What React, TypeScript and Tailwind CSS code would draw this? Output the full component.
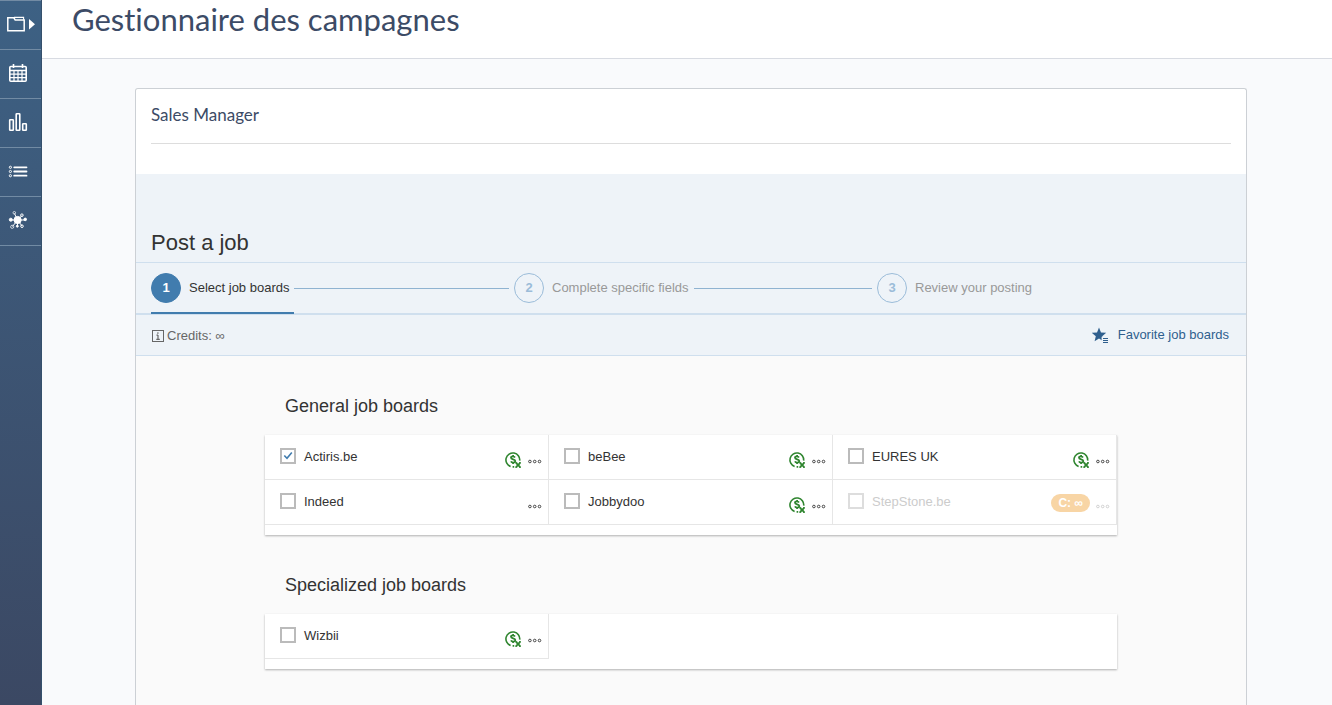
import { useState } from "react";

type Board = {
  name: string;
  free?: boolean;
  credits?: string;
  disabled?: boolean;
};

const generalBoards: Board[] = [
  { name: "Actiris.be", free: true },
  { name: "beBee", free: true },
  { name: "EURES UK", free: true },
  { name: "Indeed" },
  { name: "Jobbydoo", free: true },
  { name: "StepStone.be", credits: "C: ∞", disabled: true },
];

const specializedBoards: Board[] = [{ name: "Wizbii", free: true }];

const steps = ["Select job boards", "Complete specific fields", "Review your posting"];

const FolderIcon = () => (
  <svg width="30" height="18" viewBox="0 0 30 18" fill="none" stroke="white" strokeWidth="1.5">
    <path d="M1.8 15.8V2.8h6l1.4 2.2h9v10.8H1.8z" />
    <path d="M8 2.4h9.6v2.4" strokeWidth="1.1" />
    <path d="M23 4v10.5l6-5.2z" fill="white" stroke="none" />
  </svg>
);

const CalendarIcon = () => (
  <svg width="20" height="20" viewBox="0 0 20 20" fill="none" stroke="white" strokeWidth="1.6">
    <rect x="1.8" y="3.5" width="16.4" height="14.7" rx="1" />
    <path d="M1.7 7.5h16.6M5.5 1v4M14.5 1v4" />
    <path d="M2 11.2h16M2 14.7h16M6 8v10M10 8v10M14 8v10" strokeWidth="1.2" />
  </svg>
);

const ChartIcon = () => (
  <svg width="20" height="20" viewBox="0 0 20 20" fill="none" stroke="white" strokeWidth="1.6">
    <rect x="1.7" y="7.7" width="3.6" height="10.6" rx="0.6" />
    <rect x="8.2" y="1.7" width="3.6" height="16.6" rx="0.6" />
    <rect x="14.7" y="11.7" width="3.6" height="6.6" rx="0.6" />
  </svg>
);

const ListIcon = () => (
  <svg width="20" height="20" viewBox="0 0 20 20" fill="none" stroke="white">
    <path d="M6.2 6.3H18.5M6.2 10.5H18.5M6.2 14.7H18.5" strokeWidth="1.8" strokeLinecap="round" />
    <circle cx="2.4" cy="6.3" r="1.1" />
    <circle cx="2.4" cy="10.5" r="1.1" />
    <circle cx="2.4" cy="14.7" r="1.1" />
  </svg>
);

const NetworkIcon = () => (
  <svg width="20" height="20" viewBox="0 0 20 20" fill="none" stroke="white" strokeWidth="1">
    <path d="M9.5 10 6.5 3.5M9.5 10l4.5-4.5M9.5 10h8M9.5 10H3M9.5 10l-5 6.5M9.5 10v6M9.5 10l4.5 6" />
    <circle cx="9.6" cy="10" r="3.6" fill="white" />
    <circle cx="2.8" cy="9.7" r="1.5" fill="white" />
    <circle cx="17.2" cy="9.4" r="1.3" fill="white" />
    <circle cx="6.3" cy="2.8" r="1.3" opacity="0.7" />
    <circle cx="13.9" cy="5.2" r="1.3" />
    <circle cx="4.2" cy="16.8" r="1.6" opacity="0.7" />
    <circle cx="9.3" cy="16.2" r="1" fill="white" />
    <circle cx="14" cy="16.2" r="1.3" />
  </svg>
);

const FreeIcon = () => (
  <svg width="18" height="18" viewBox="0 0 18 18" fill="none" stroke="#2f852f">
    <path d="M6.6 15.4A6.9 6.9 0 1 1 15.7 9.6M8.6 15.9h1.6" strokeWidth="1.6" />
    <path
      d="M11 6.5C10.5 5.7 9.8 5.4 8.9 5.4c-1.1 0-1.9.5-1.9 1.4 0 2.1 4.3 1.1 4.3 3.3 0 1-.9 1.5-2.1 1.5-1 0-1.9-.4-2.3-1.2M9.1 4v1.4M9.1 11.6V13"
      strokeWidth="1.8"
    />
    <path d="M12 11.8l4.2 4.4M16.2 11.8 12 16.2" strokeWidth="1.8" />
    <path d="M11.2 11.7h2M15 11.7h2M11.2 16.3h2M15 16.3h2" strokeWidth="1" />
  </svg>
);

const DotsIcon = () => (
  <svg width="14" height="5" viewBox="0 0 14 5" fill="none" stroke="currentColor" strokeWidth="0.9">
    <circle cx="1.9" cy="2.5" r="1.3" />
    <circle cx="6.7" cy="2.5" r="1.3" />
    <circle cx="11.5" cy="2.5" r="1.3" />
  </svg>
);

const InfoIcon = () => (
  <svg width="12" height="13" viewBox="0 0 12 13" fill="none" stroke="#666">
    <rect x="0.5" y="0.5" width="11" height="11" />
    <path d="M6 5v4.2M4.5 5.2H6M4.3 9.3h3.5" strokeWidth="1.2" />
    <circle cx="5.9" cy="3.1" r="0.8" fill="#666" stroke="none" />
  </svg>
);

const StarIcon = () => (
  <svg width="17" height="17" viewBox="0 0 17 17">
    <path d="M7 0.6 9 5.4l5.2.4-4 3.4 1.2 5L7 11.5l-4.4 2.7 1.2-5-4-3.4L5 5.4z" fill="#2f5f8e" />
    <path d="M9.6 9.8h7.4V17H9.6z" fill="#eef3f8" />
    <path d="M11 11.5h5M11 13.5h5M11 15.5h5" stroke="#2f5f8e" strokeWidth="1" />
  </svg>
);

const navItems = [
  { label: "Folders", icon: <FolderIcon /> },
  { label: "Calendar", icon: <CalendarIcon /> },
  { label: "Statistics", icon: <ChartIcon /> },
  { label: "List", icon: <ListIcon /> },
  { label: "Network", icon: <NetworkIcon /> },
];

const Sidebar = () => (
  <nav className="w-[42px] shrink-0 border-r border-[#35506c] bg-linear-to-b from-[#3d6184] to-[#3b4863]">
    {navItems.map((item, i) => (
      <a
        key={item.label}
        href="#"
        aria-label={item.label}
        className={`flex items-center border-b border-[#728ba4] pb-[2px] ${
          i === 0 ? "h-[50px] border-t pl-[6px]" : "h-[49px] pl-2"
        }`}
      >
        {item.icon}
      </a>
    ))}
  </nav>
);

const Steps = () => (
  <ol className="grid h-[52px] grid-cols-3 border-b-2 border-[#cfdfee] pr-[6px] pl-[15px]">
    {steps.map((step, i) => (
      <li key={step} className="flex items-center">
        <button
          type="button"
          className={`-mb-px flex h-[51px] items-center gap-2 border-b-2 pr-[5px] ${
            i === 0 ? "border-[#417cae] text-[#333]" : "border-transparent text-[#999]"
          }`}
        >
          <span
            className={`flex size-[30px] items-center justify-center rounded-full border font-bold ${
              i === 0
                ? "border-[#417cae] bg-[#417cae] text-white"
                : "border-[#9bbcd9] text-[#9bbcd9]"
            }`}
          >
            {i + 1}
          </span>
          {step}
        </button>
        {i < steps.length - 1 && <span className="mr-[5px] h-px flex-1 bg-[#8fb3d1]" />}
      </li>
    ))}
  </ol>
);

const BoardCell = ({ board }: { board: Board }) => {
  const [checked, setChecked] = useState(board.name === "Actiris.be");

  return (
    <div
      className={`flex h-[45px] items-center border-r border-b border-[#e6e6e6] pr-[6px] pl-[15px] ${
        board.disabled ? "text-[#ccc]" : "text-[#333]"
      }`}
    >
      <label className="flex flex-1 items-center gap-2">
        <span className="grid pb-[2px]">
          <input
            type="checkbox"
            checked={checked}
            disabled={board.disabled}
            onChange={(e) => setChecked(e.target.checked)}
            className="col-start-1 row-start-1 size-4 appearance-none border-2 border-[#bbb] bg-white disabled:border-[#ddd]"
          />
          {checked && (
            <svg
              className="pointer-events-none col-start-1 row-start-1 size-4"
              viewBox="0 0 16 16"
              fill="none"
              stroke="#417cae"
              strokeWidth="1.6"
            >
              <path d="M4.3 7.5 7 10.3l4.8-5.8" />
            </svg>
          )}
        </span>
        {board.name}
      </label>
      <div className="flex items-center gap-[6px] pt-[6px]">
        {board.free && <FreeIcon />}
        {board.credits && (
          <span className="mb-1 rounded-full bg-[#f8d5a5] px-[7px] text-[12px] leading-[18px] font-bold text-white">
            {board.credits}
          </span>
        )}
        <button type="button" aria-label={`${board.name} options`} className="pt-[2px]">
          <DotsIcon />
        </button>
      </div>
    </div>
  );
};

const BoardGroup = ({ title, boards }: { title: string; boards: Board[] }) => (
  <section>
    <h3 className="pl-5 text-[18px] leading-6 text-[#333]">{title}</h3>
    <div className="mt-[17px] grid grid-cols-3 bg-white pb-[10px] shadow-[0_1px_2px_rgba(0,0,0,0.3)]">
      {boards.map((board) => (
        <BoardCell key={board.name} board={board} />
      ))}
    </div>
  </section>
);

const App = () => {
  return (
    <div className="flex min-h-screen bg-[#f9fafc] font-['Liberation_Sans',Arial,sans-serif] text-[13px]">
      <Sidebar />
      <div className="flex flex-1 flex-col">
        <header className="h-[59px] border-b border-[#d8dbe2] bg-white px-[30px]">
          <h1 className="font-[Lato,sans-serif] text-[31px] leading-[38px] text-[#3c4b66] [font-variant-ligatures:none]">
            Gestionnaire des campagnes
          </h1>
        </header>

        <main className="flex flex-1 flex-col pt-[29px] pr-[85px] pl-[93px]">
          <div className="flex-1 rounded-t-[3px] border border-b-0 border-[#ccd0d5] bg-[#fafafa]">
            {/* Job title */}
            <div className="rounded-t-[3px] bg-white px-[15px] pb-[30px]">
              <h2 className="border-b border-[#ddd] pt-[14px] pb-4 font-[Lato,sans-serif] text-[17px] leading-6 text-[#3c4b66]">
                Sales Manager
              </h2>
            </div>

            {/* Posting steps */}
            <div className="bg-[#eef3f8]">
              <h2 className="border-b border-[#cfdfee] px-[15px] pt-[55px] pb-[5px] text-[22px] leading-7 text-[#333]">
                Post a job
              </h2>
              <Steps />
              <div className="flex h-[41px] items-center justify-between border-b border-[#cfdfee] pr-[17px] pl-4">
                <p className="flex items-center gap-[3px] pt-[2px] text-[#666]">
                  <InfoIcon />
                  Credits: ∞
                </p>
                <a href="#" className="flex items-center gap-[9px] text-[#2f5f8e]">
                  <StarIcon />
                  Favorite job boards
                </a>
              </div>
            </div>

            {/* Job boards */}
            <div className="flex flex-col gap-[38px] px-[129px] pt-[38px]">
              <BoardGroup title="General job boards" boards={generalBoards} />
              <BoardGroup title="Specialized job boards" boards={specializedBoards} />
            </div>
          </div>
        </main>
      </div>
    </div>
  );
};

export default App;
